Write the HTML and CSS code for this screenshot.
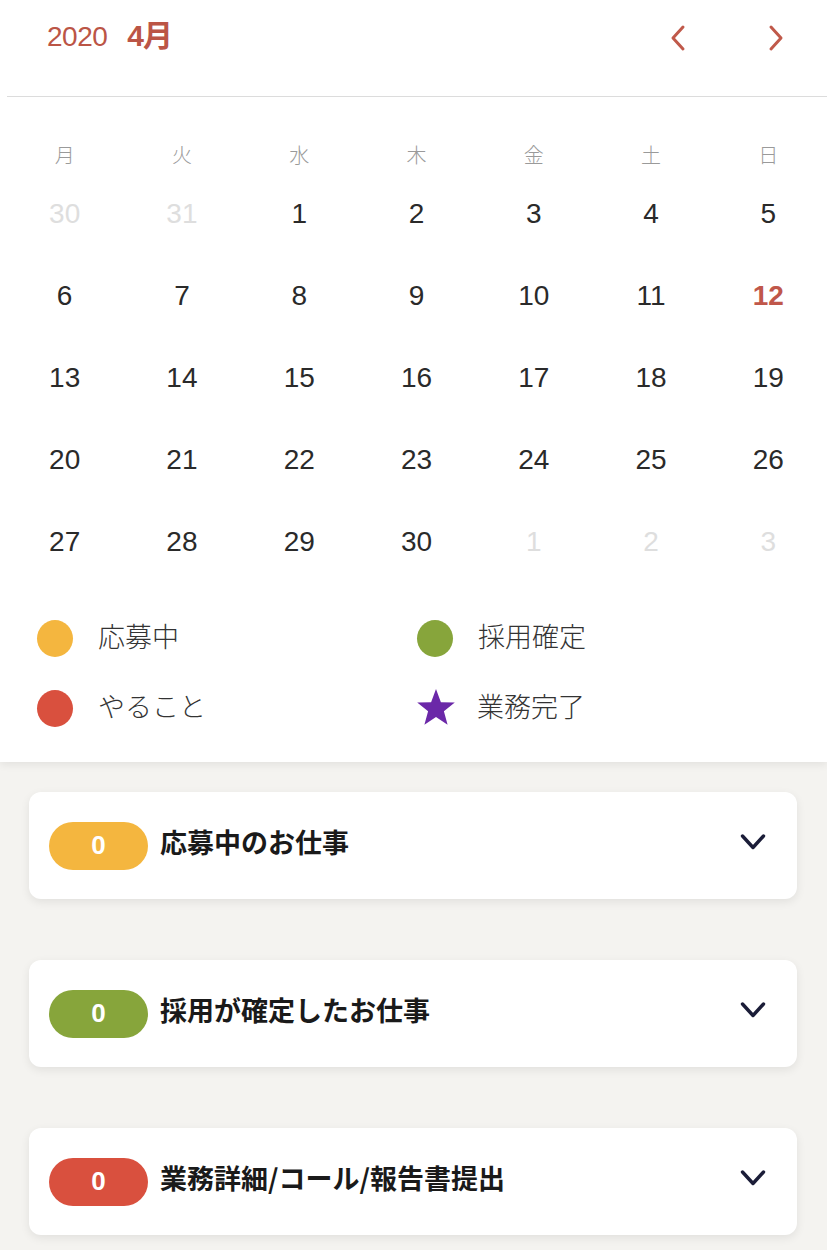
FILE: index.html
```html
<!DOCTYPE html>
<html lang="ja">
<head>
<meta charset="utf-8">
<title>Calendar</title>
<link rel="stylesheet" href="styles.css">
</head>
<body>
<section class="calendar">
  <header class="cal-head">
    <div class="month"><span class="year">2020</span><strong>4月</strong></div>
    <div class="nav">
      <button class="nav-btn" aria-label="前の月"><svg width="20" height="28" viewBox="0 0 20 28"><path d="M15 3 L5 14 L15 25" fill="none" stroke="#c0594a" stroke-width="3" stroke-linecap="round" stroke-linejoin="round"/></svg></button>
      <button class="nav-btn" aria-label="次の月"><svg width="20" height="28" viewBox="0 0 20 28"><path d="M5 3 L15 14 L5 25" fill="none" stroke="#c0594a" stroke-width="3" stroke-linecap="round" stroke-linejoin="round"/></svg></button>
    </div>
  </header>
  <div class="grid weekdays">
    <span>月</span><span>火</span><span>水</span><span>木</span><span>金</span><span>土</span><span>日</span>
  </div>
  <div class="grid days">
    <span class="out">30</span><span class="out">31</span><span>1</span><span>2</span><span>3</span><span>4</span><span>5</span>
    <span>6</span><span>7</span><span>8</span><span>9</span><span>10</span><span>11</span><span class="today">12</span>
    <span>13</span><span>14</span><span>15</span><span>16</span><span>17</span><span>18</span><span>19</span>
    <span>20</span><span>21</span><span>22</span><span>23</span><span>24</span><span>25</span><span>26</span>
    <span>27</span><span>28</span><span>29</span><span>30</span><span class="out">1</span><span class="out">2</span><span class="out">3</span>
  </div>
  <div class="legend">
    <div class="legend-item"><i class="dot yellow"></i><span>応募中</span></div>
    <div class="legend-item"><i class="dot green"></i><span>採用確定</span></div>
    <div class="legend-item"><i class="dot red"></i><span>やること</span></div>
    <div class="legend-item"><svg class="star" width="40" height="40" viewBox="0 0 40 40"><path d="M20 1 L24.9 14.2 L38.8 14.6 L27.9 23.3 L31.6 36.8 L20 29 L8.4 36.8 L12.1 23.3 L1.2 14.6 L15.1 14.2 Z" fill="#6b28a8"/></svg><span>業務完了</span></div>
  </div>
</section>

<section class="cards">
  <div class="card">
    <span class="badge yellow">0</span>
    <span class="card-title">応募中のお仕事</span>
    <svg class="chev" width="26" height="18" viewBox="0 0 26 18"><path d="M2.5 3 L13 14.5 L23.5 3" fill="none" stroke="#1b1d38" stroke-width="3.4" stroke-linecap="round" stroke-linejoin="round"/></svg>
  </div>
  <div class="card">
    <span class="badge green">0</span>
    <span class="card-title">採用が確定したお仕事</span>
    <svg class="chev" width="26" height="18" viewBox="0 0 26 18"><path d="M2.5 3 L13 14.5 L23.5 3" fill="none" stroke="#1b1d38" stroke-width="3.4" stroke-linecap="round" stroke-linejoin="round"/></svg>
  </div>
  <div class="card">
    <span class="badge red">0</span>
    <span class="card-title">業務詳細/コール/報告書提出</span>
    <svg class="chev" width="26" height="18" viewBox="0 0 26 18"><path d="M2.5 3 L13 14.5 L23.5 3" fill="none" stroke="#1b1d38" stroke-width="3.4" stroke-linecap="round" stroke-linejoin="round"/></svg>
  </div>
</section>
</body>
</html>
```
FILE: styles.css
```css
* { box-sizing: border-box; }
html, body {
  margin: 0;
  padding: 0;
}
body {
  background: #f4f3f0;
  font-family: "Liberation Sans", "Noto Sans CJK JP", sans-serif;
  color: #222;
  width: 827px;
  height: 1250px;
  overflow: hidden;
}
.calendar {
  background: #fff;
  height: 762px;
  box-shadow: 0 3px 8px rgba(0, 0, 0, 0.07);
  position: relative;
  z-index: 1;
}
.cal-head {
  height: 97px;
  margin-left: 7px;
  border-bottom: 1px solid #dcdcdc;
  display: flex;
  justify-content: space-between;
  align-items: flex-start;
  padding: 18px 41px 0 40px;
}
.month {
  display: flex;
  align-items: baseline;
  gap: 20px;
  color: #bb5546;
  line-height: 36px;
}
.year {
  font-size: 28px;
  letter-spacing: -0.5px;
}
.month strong {
  font-size: 30px;
  font-weight: 700;
  letter-spacing: -1px;
}
.nav {
  display: flex;
  gap: 78px;
  padding-top: 6px;
}
.nav-btn {
  background: none;
  border: 0;
  padding: 0;
  width: 20px;
  height: 28px;
  display: block;
}
.grid {
  display: grid;
  grid-template-columns: repeat(7, 1fr);
  padding-left: 6px;
  text-align: center;
}
.weekdays {
  padding-top: 40px;
}
.weekdays span {
  line-height: 36px;
  font-size: 20px;
  color: #9a9a9a;
  font-family: "Noto Sans CJK JP", sans-serif;
  font-weight: 300;
}
.days span {
  height: 82px;
  line-height: 82px;
  font-size: 28px;
  color: #2a2a2a;
}
.days .out { color: #dedede; }
.days .today { color: #c0574a; font-weight: 700; }
.legend {
  display: grid;
  grid-template-columns: 380px 1fr;
  row-gap: 34px;
  padding: 37px 0 0 37px;
}
.legend-item {
  display: flex;
  align-items: center;
  height: 36px;
  font-family: "Noto Sans CJK JP", sans-serif;
  font-size: 27px;
  font-weight: 300;
  color: #333;
}
.legend-item span {
  margin-bottom: 6px;
}
.dot {
  width: 36px;
  height: 37px;
  border-radius: 50%;
  margin-right: 25px;
  flex: none;
}
.star {
  margin: 0 21px 0 -1px;
  flex: none;
}
.yellow { background: #f4b63f; }
.green { background: #87a53b; }
.red { background: #d9503e; }
.cards {
  padding: 30px 30px 0 29px;
  display: flex;
  flex-direction: column;
  gap: 61px;
}
.card {
  height: 107px;
  background: #fff;
  border-radius: 12px;
  box-shadow: 0 3px 10px rgba(0, 0, 0, 0.08);
  display: flex;
  align-items: center;
  padding: 0 31px 0 20px;
}
.badge {
  width: 99px;
  height: 48px;
  border-radius: 24px;
  color: #fff;
  font-weight: 700;
  font-size: 26px;
  display: flex;
  align-items: center;
  justify-content: center;
  margin-right: 12px;
  flex: none;
}
.card-title {
  font-family: "Noto Sans CJK JP", sans-serif;
  font-weight: 700;
  font-size: 27px;
  color: #1a1a1a;
  flex: 1;
  margin-bottom: 8px;
}
.chev {
  flex: none;
  margin-bottom: 8px;
}
```
